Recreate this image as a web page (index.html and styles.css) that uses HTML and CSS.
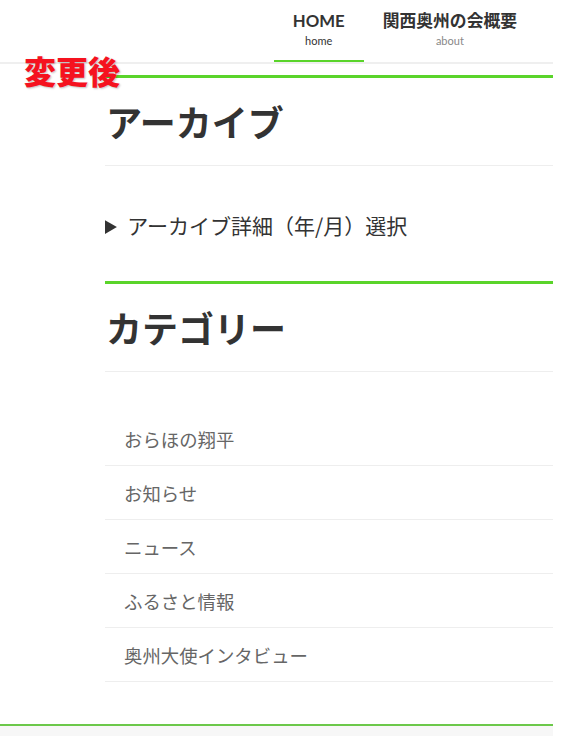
FILE: index.html
```html
<!DOCTYPE html>
<html lang="ja">
<head>
<meta charset="utf-8">
<title>アーカイブ</title>
<link rel="stylesheet" href="styles.css">
</head>
<body>
<div class="page">
  <header class="site-header">
    <nav class="nav">
      <a class="nav-item active" href="#"><span class="nav-main">HOME</span><span class="nav-sub">home</span></a>
      <a class="nav-item" href="#"><span class="nav-main">関西奥州の会概要</span><span class="nav-sub muted">about</span></a>
    </nav>
  </header>
  <div class="note">変更後</div>
  <main class="content">
    <aside class="sidebar">
      <section class="widget">
        <h2 class="widget-title">アーカイブ</h2>
        <details class="archive">
          <summary>アーカイブ詳細（年/月）選択</summary>
        </details>
      </section>
      <section class="widget">
        <h2 class="widget-title">カテゴリー</h2>
        <ul class="cat-list">
          <li><a href="#">おらほの翔平</a></li>
          <li><a href="#">お知らせ</a></li>
          <li><a href="#">ニュース</a></li>
          <li><a href="#">ふるさと情報</a></li>
          <li><a href="#">奥州大使インタビュー</a></li>
        </ul>
      </section>
    </aside>
  </main>
  <footer class="site-footer"></footer>
</div>
</body>
</html>
```

FILE: styles.css
```css
html, body {
  margin: 0;
  padding: 0;
  background: #fff;
}
body {
  font-family: Lato, "Noto Sans CJK JP", sans-serif;
  color: #333;
}
.page {
  width: 553px;
  position: relative;
}
.site-header {
  height: 62px;
  border-bottom: 2px solid #efefef;
  display: flex;
  justify-content: flex-end;
  padding-right: 17px;
}
.nav {
  display: flex;
  height: 62px;
}
.nav-item {
  display: flex;
  flex-direction: column;
  align-items: center;
  padding: 0 19px;
  text-decoration: none;
  color: #333;
  box-sizing: border-box;
  height: 62px;
}
.nav-item.active {
  border-bottom: 2px solid #5ad42a;
}
.nav-main {
  font-weight: 700;
  font-size: 16.8px;
  line-height: 20px;
  margin-top: 11px;
}
.nav-sub {
  font-size: 11px;
  line-height: 12px;
  margin-top: 4px;
  color: #333;
}
.nav-sub.muted {
  color: #888;
}
.note {
  position: absolute;
  left: 24px;
  top: 51px;
  font-family: "Noto Sans CJK JP", sans-serif;
  font-weight: 900;
  font-size: 32px;
  line-height: 38px;
  color: #f5121f;
  text-shadow: 1px 1px 2px rgba(0,0,0,0.25);
  z-index: 2;
}
.content {
  padding: 11px 0 0 105px;
}
.widget {
  border-top: 3px solid #5ad42a;
}
.widget-title {
  margin: 0;
  font-family: "Noto Sans CJK JP", sans-serif;
  font-size: 36px;
  font-weight: 700;
  line-height: 44px;
  padding: 21px 0 22px 1px;
  border-bottom: 1px solid #eeeeee;
  color: #333;
}
.archive {
  padding: 47px 0 44px;
  font-family: "Noto Sans CJK JP", sans-serif;
  font-size: 21px;
  line-height: 24px;
  color: #333;
}
.archive summary {
  cursor: pointer;
}
.cat-list {
  list-style: none;
  margin: 0;
  padding: 40px 0 42px;
}
.cat-list li {
  border-bottom: 1px solid #eeeeee;
}
.cat-list a {
  display: block;
  padding: 15px 20px 13px 19px;
  font-family: "Noto Sans CJK JP", sans-serif;
  font-size: 18.4px;
  line-height: 25px;
  color: #666;
  text-decoration: none;
}
.site-footer {
  border-top: 2px solid #6cc84a;
  background: #f7f7f7;
  height: 30px;
}
```
